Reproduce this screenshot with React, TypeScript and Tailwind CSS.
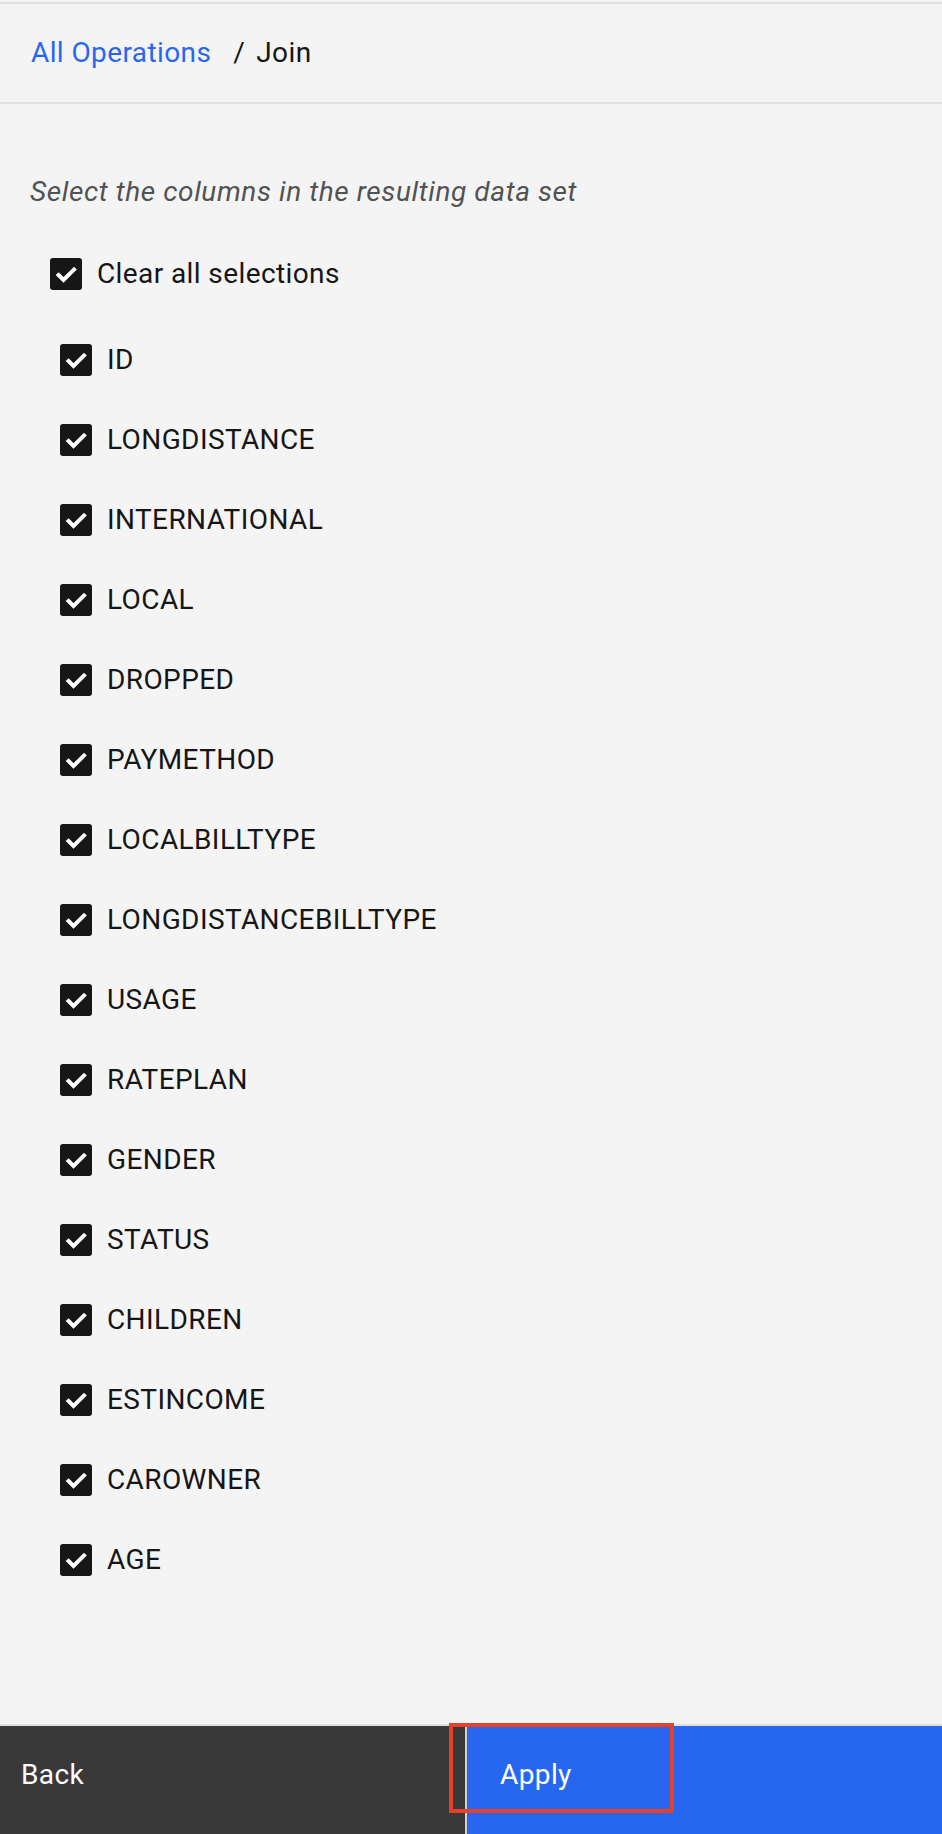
const columns = [
  'ID',
  'LONGDISTANCE',
  'INTERNATIONAL',
  'LOCAL',
  'DROPPED',
  'PAYMETHOD',
  'LOCALBILLTYPE',
  'LONGDISTANCEBILLTYPE',
  'USAGE',
  'RATEPLAN',
  'GENDER',
  'STATUS',
  'CHILDREN',
  'ESTINCOME',
  'CAROWNER',
  'AGE',
];

function CheckBox() {
  return (
    <span className="flex h-[32px] w-[32px] shrink-0 items-center justify-center rounded-[3px] bg-[#161616]">
      <svg viewBox="0 0 32 32" className="h-[32px] w-[32px]">
        <polyline
          points="8.5,17 13.5,22 24,11.5"
          fill="none"
          stroke="#ffffff"
          strokeWidth="4"
          strokeLinecap="square"
          strokeLinejoin="miter"
        />
      </svg>
    </span>
  );
}

export default function App() {
  return (
    <div
      className="relative flex min-h-[1834px] w-full flex-col bg-[#f4f4f4] text-[28px] tracking-[0.4px] text-[#161616]"
      style={{ fontFamily: 'Roboto, "Liberation Sans", sans-serif' }}
    >
      {/* Breadcrumb header */}
      <div className="mt-[2px] flex h-[102px] items-center border-y-2 border-[#e0e0e0] px-[31px] leading-[36px]">
        <span className="text-[#2767f0]">All Operations</span>
        <span className="ml-[22px] mr-[11px]">/</span>
        <span>Join</span>
      </div>

      {/* Column selection */}
      <div className="flex-1">
        <p className="mt-[70px] pl-[30px] italic leading-[36px] tracking-[0.6px] text-[#525252]">
          Select the columns in the resulting data set
        </p>

        <div className="mt-[24px] flex h-[80px] items-center gap-[15px] pl-[50px]">
          <CheckBox />
          <span className="leading-[36px]">Clear all selections</span>
        </div>

        <div className="mt-[6px] flex flex-col">
          {columns.map((c) => (
            <div key={c} className="flex h-[80px] items-center gap-[15px] pl-[60px]">
              <CheckBox />
              <span className="leading-[36px]">{c}</span>
            </div>
          ))}
        </div>
      </div>

      {/* Footer buttons */}
      <div className="flex h-[110px] border-t-2 border-[#e0e0e0] text-white">
        <div className="w-[465px] bg-[#393939] pl-[21px] pt-[31px] leading-[36px]">Back</div>
        <div className="w-[2px] bg-[#d0d0d0]" />
        <div className="flex-1 bg-[#2767f0] pl-[33px] pt-[31px] leading-[36px]">Apply</div>
      </div>

      {/* highlight annotation */}
      <div className="pointer-events-none absolute left-[449px] top-[1723px] h-[90px] w-[225px] border-[4px] border-[#e7412b]" />
    </div>
  );
}
